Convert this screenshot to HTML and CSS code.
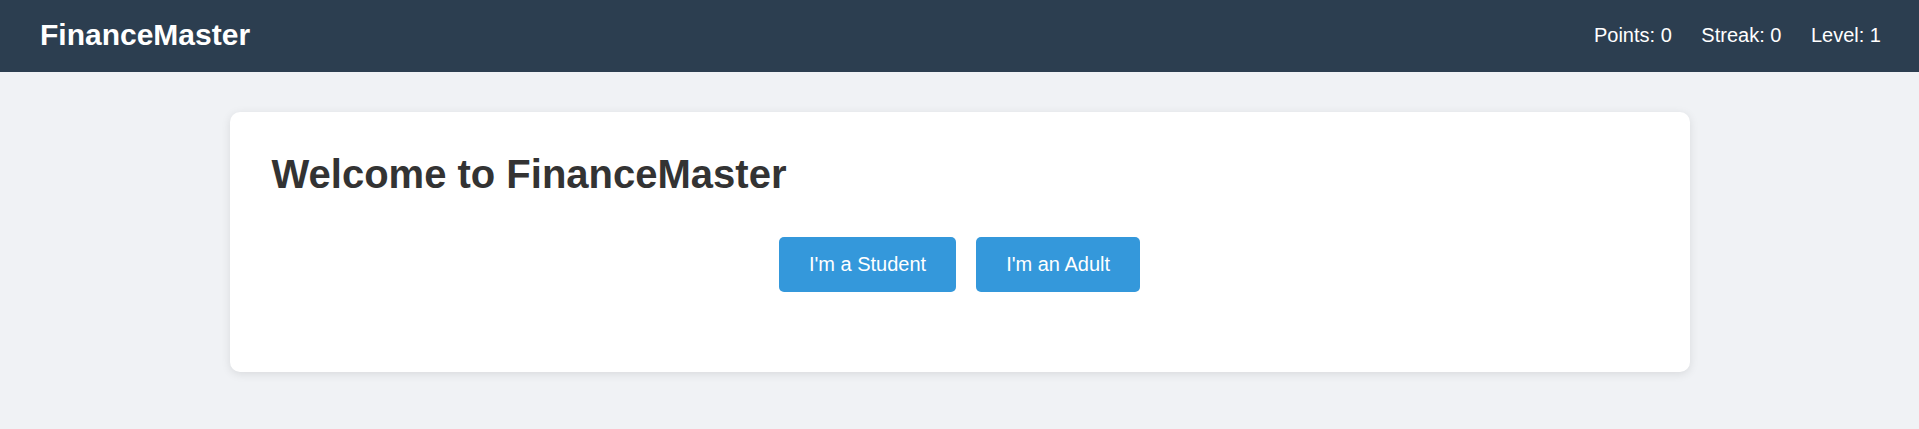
FILE: index.html
```html
<!DOCTYPE html>
<html lang="en">
<head>
<meta charset="utf-8">
<title>FinanceMaster</title>
<link rel="stylesheet" href="styles.css">
</head>
<body>
<header class="topbar">
  <div class="logo">FinanceMaster</div>
  <div class="stats">
    <span class="stat">Points: 0</span>
    <span class="stat">Streak: 0</span>
    <span class="stat">Level: 1</span>
  </div>
</header>
<main class="main">
  <section class="card">
    <h1 class="title">Welcome to FinanceMaster</h1>
    <div class="choices">
      <button class="btn">I'm a Student</button>
      <button class="btn">I'm an Adult</button>
    </div>
  </section>
</main>
</body>
</html>
```

FILE: styles.css
```css
* { box-sizing: border-box; }
html, body {
  margin: 0;
  padding: 0;
}
body {
  background: #f0f2f5;
  font-family: "Liberation Sans", Arial, sans-serif;
  color: #333;
}
.topbar {
  background: #2c3e50;
  color: #fff;
  height: 72px;
  padding: 0 38px 0 40px;
  display: flex;
  align-items: center;
  justify-content: space-between;
}
.logo {
  font-size: 30px;
  font-weight: bold;
  line-height: 34px;
  margin-top: -2px;
}
.stats {
  font-size: 20px;
  margin-top: -1px;
}
.stat { margin-left: 24px; }
.main {
  padding: 40px 0;
}
.card {
  width: 1460px;
  margin: 0 auto;
  background: #fff;
  border-radius: 10px;
  box-shadow: 0 2px 10px rgba(0, 0, 0, 0.1);
  padding: 39px 42px 80px;
}
.title {
  margin: 0 0 40px;
  font-size: 40px;
  line-height: 46px;
  font-weight: bold;
  color: #333;
}
.choices {
  display: flex;
  justify-content: center;
  gap: 20px;
}
.btn {
  font-family: "Liberation Sans", Arial, sans-serif;
  font-size: 20px;
  line-height: 23px;
  padding: 16px 30px;
  border: none;
  border-radius: 5px;
  background: #3498db;
  color: #fff;
  cursor: pointer;
}
```
